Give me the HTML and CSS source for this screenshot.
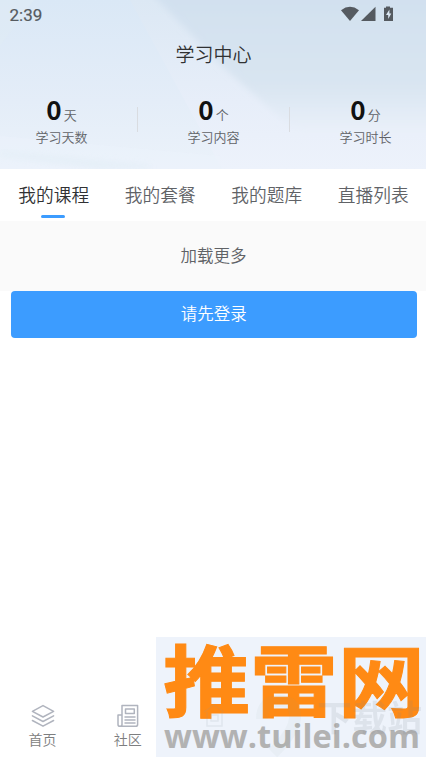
FILE: index.html
```html
<!DOCTYPE html>
<html lang="zh-CN">
<head>
<meta charset="utf-8">
<meta name="viewport" content="width=device-width, initial-scale=1">
<title>学习中心</title>
<link rel="stylesheet" href="styles.css">
</head>
<body>
<div class="app">
  <header class="hero">
    <svg class="hero-bg" viewBox="0 0 426 169" preserveAspectRatio="none" aria-hidden="true">
      <defs>
        <linearGradient id="base" x1="0" y1="0" x2="0" y2="1">
          <stop offset="0" stop-color="#dae8f6"/><stop offset=".6" stop-color="#e4edf8"/><stop offset="1" stop-color="#ebf2fa"/>
        </linearGradient>
        <linearGradient id="ray" x1="0" y1="0" x2="0" y2="1">
          <stop offset="0" stop-color="#dce8f4"/><stop offset=".6" stop-color="#e7eef9"/><stop offset="1" stop-color="#edf2fb"/>
        </linearGradient>
        <linearGradient id="shade" x1="0" y1="0" x2="0" y2="1">
          <stop offset="0" stop-color="#d1e0ef"/><stop offset=".65" stop-color="#d9e5f1"/><stop offset="1" stop-color="#ebf1fa"/>
        </linearGradient>
        <filter id="soft"><feGaussianBlur stdDeviation="3"/></filter>
      </defs>
      <rect width="426" height="169" fill="url(#base)"/>
      <path d="M0 0H34L0 46Z" fill="#e0ebf5" opacity=".6"/>
      <path d="M130 0H426V169H222Z" fill="url(#ray)"/>
      <path d="M148-10H440V136H302Q278 116 222 66Z" fill="url(#shade)" filter="url(#soft)"/>
      <path d="M0 136L220 156V169H0Z" fill="#eff4fc" opacity=".35"/>
      <path d="M0 151L150 165V169H100L0 156Z" fill="#e1edf5" opacity=".6" filter="url(#soft)"/>
    </svg>
    <div class="status">
      <span class="time">2:39</span>
      <svg class="signals" width="54" height="16" viewBox="0 0 54 16" fill="#555a60" aria-hidden="true">
        <path d="M0 4.200Q9-2.600 18 4.200L9 15Z"/>
        <path d="M20 15L34.500.800V15Z"/>
        <path d="M45 .400h4v1.400h3V15H43V1.800h2Z"/>
        <path d="M48.400 3.500L45 9h2.200v4L50.300 7.500H48.400Z" fill="#dce8f4"/>
      </svg>
    </div>
    <h1 class="title">学习中心</h1>
    <div class="stats">
      <div class="stat"><div class="value"><b>0</b><span>天</span></div><div class="label">学习天数</div></div>
      <div class="stat"><div class="value"><b>0</b><span>个</span></div><div class="label">学习内容</div></div>
      <div class="stat"><div class="value"><b>0</b><span>分</span></div><div class="label">学习时长</div></div>
    </div>
  </header>
  <nav class="tabs">
    <a class="tab active">我的课程</a><a class="tab">我的套餐</a><a class="tab">我的题库</a><a class="tab">直播列表</a>
  </nav>
  <div class="more">加载更多</div>
  <button class="login">请先登录</button>
  <footer class="tabbar">
    <a class="item">
      <svg width="24" height="24" viewBox="0 0 24 24" aria-hidden="true"><path d="M12 1.600L22.600 7.300 12 13 1.400 7.300ZM1.400 11.800L12 17.500l10.600-5.700M1.400 16.500L12 22.200l10.600-5.700"/></svg>
      <span>首页</span>
    </a>
    <a class="item">
      <svg width="24" height="24" viewBox="0 0 24 24" aria-hidden="true"><path d="M6 1.600H21.600V20.400Q21.600 22.300 19.700 22.300H4Q2 22.300 2 20.400V11H6M6 1.600V20.400Q6 22.300 4 22.300M9.500 5H18.300V9.500H9.500ZM9 13H19M9 16H19M9 19H19"/></svg>
      <span>社区</span>
    </a>
  </footer>
  <div class="watermark">
    <svg width="270" height="120" viewBox="0 0 270 120">
      <text class="brand" x="7" y="74" textLength="262" lengthAdjust="spacingAndGlyphs">推雷网</text>
      <text class="url" x="8" y="111" textLength="256" lengthAdjust="spacingAndGlyphs">www.tuilei.com</text>
      <g class="ghost-icon"><path d="M48 75l10-7 10 7M51 75v14h15V75M55 78h7v6h-7Z"/></g>
      <path class="ghost-arc" d="M106 82Q106 64 123 64t16 16q0 14-22 36"/>
      <text class="ghost" x="161" y="94">下载站</text>
    </svg>
  </div>
</div>
</body>
</html>
```
FILE: styles.css
```css
* { box-sizing: border-box; }
body { margin: 0; background: #fff; font-family: "Noto Sans CJK SC", sans-serif; font-weight: 350; color: #606266; }
.app { position: relative; width: 426px; height: 757px; overflow: hidden; display: flex; flex-direction: column; }
.hero { position: relative; height: 169px; overflow: hidden; flex: none; }
.hero > * { position: relative; }
.hero > .hero-bg { position: absolute; inset: 0; width: 100%; height: 100%; }
.status { display: flex; justify-content: space-between; height: 30px; padding: 6px 31px 0 9.500px; }
.time { font: 400 17px/18px Roboto, sans-serif; color: #555a60; -webkit-text-stroke: .2px #555a60; }
.title { margin: 10px 0 0; padding-left: 1px; text-align: center; font-size: 19px; font-weight: 350; line-height: 28px; color: #303133; }
.stats { display: grid; grid-template-columns: repeat(3, 152px); margin: 23px 0 0 -15px; }
.stat { position: relative; padding-left: 1px; text-align: center; }
.stat + .stat::before { content: ""; position: absolute; left: 0; top: 16px; width: 1px; height: 25px; background: #d9dce1; }
.value { height: 35px; line-height: 35px; display: flex; justify-content: center; align-items: baseline; gap: 2px; }
.value b { font: 700 26px/35px "Noto Sans CJK SC", sans-serif; color: #111; }
.value span { font-size: 13px; }
.label { font-size: 13px; line-height: 20px; margin-top: 1px; }
.tabs { display: grid; grid-template-columns: repeat(4, 1fr); height: 52px; flex: none; }
.tab { position: relative; text-align: center; font-size: 17.700px; line-height: 51px; padding-left: 1px; }
.tab.active { color: #303133; }
.tab.active::after { content: ""; position: absolute; left: 50%; top: 46px; width: 24px; height: 3px; margin-left: -12px; border-radius: 2px; background: #3c9cff; }
.more { height: 70px; flex: none; background: #fafafa; text-align: center; font-size: 16.500px; line-height: 69px; padding-left: 1px; }
.login { margin: 0 9.500px 0 11px; height: 47px; flex: none; border: 0; border-radius: 4px; background: #3c9cff; color: #fff; font: 350 16.500px/45px "Noto Sans CJK SC", sans-serif; padding: 0 0 2px; }
.tabbar { margin-top: auto; height: 54px; display: grid; grid-template-columns: repeat(5, 1fr); }
.item { display: flex; flex-direction: column; align-items: center; font-size: 14px; line-height: 20px; color: #7d7e80; padding-top: 1px; }
.item svg { fill: none; stroke: #b0b4be; stroke-width: 1.500; stroke-linejoin: round; stroke-linecap: round; }
.item span { margin-top: 1px; }
.watermark { position: absolute; right: 0; bottom: 0; width: 270px; height: 120px; background: #eef3fb; }
.watermark svg { display: block; }
.brand { font: 700 78px "Noto Sans CJK SC", sans-serif; fill: #ff8a14; stroke: #ff8a14; stroke-width: 1; }
.url { font: 700 32px "Open Sans", sans-serif; fill: #b2b2b2; }
.ghost { font: 700 35px "Noto Sans CJK SC", sans-serif; fill: #7e8792; opacity: .14; }
.ghost-icon { fill: none; stroke: #909aa6; stroke-width: 1.500; opacity: .14; }
.ghost-arc { fill: none; stroke: #8ba69b; stroke-width: 12; opacity: .06; }
```
